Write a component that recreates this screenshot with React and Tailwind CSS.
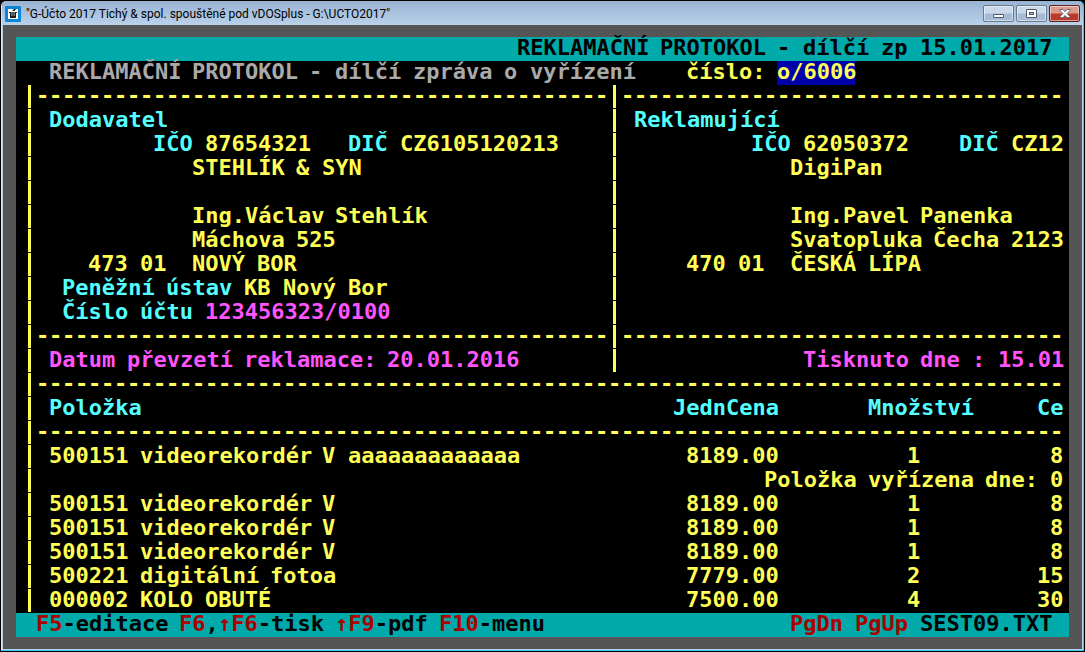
const LINE =
  "grid h-6 grid-cols-[repeat(80,minmax(0,1fr))] pl-[7px] pr-[6px] leading-[22px]";

// Screen texts sit on an 80 column character grid, `at` is the first column
const place = (at, length) => ({ gridColumn: `${at + 1} / span ${length}` });

// Words with their offsets inside the run, so each one starts on its own column
const wordsOf = (text) =>
  [...text.matchAll(/\S+/g)].map((m) => ({ offset: m.index, word: m[0] }));

function Run({ as: Tag = "span", at, text, className = "" }) {
  return (
    <Tag
      className={`row-start-1 grid grid-cols-subgrid p-0 text-left whitespace-pre ${className}`}
      style={place(at, text.length)}
    >
      {wordsOf(text).map(({ offset, word }) => (
        <span key={offset} className="row-start-1" style={place(offset, word.length)}>
          {word}
        </span>
      ))}
    </Tag>
  );
}

function Bar({ at = 0, as: Tag = "span" }) {
  return (
    <Tag className="row-start-1 flex justify-center p-0" style={place(at, 1)}>
      <span className="h-[23px] w-[3px] bg-[#ffff55]" />
    </Tag>
  );
}

function Dashes({ at, count, as: Tag = "span" }) {
  return (
    <Tag
      className="row-start-1 grid grid-cols-subgrid p-0 text-center"
      style={place(at, count)}
    >
      {Array.from({ length: count }, (_, i) => (
        <span key={i}>-</span>
      ))}
    </Tag>
  );
}

const Line = ({ children, className = "" }) => (
  <div className={`${LINE} ${className}`}>{children}</div>
);

function Split({ children }) {
  return (
    <Line>
      <Bar />
      <Bar at={45} />
      {children}
    </Line>
  );
}

const CYAN = "text-[#55ffff]";
const PINK = "text-[#ff55ff]";

const items = [
  { name: "500151 videorekordér V aaaaaaaaaaaaa", price: "8189.00", count: "1", total: "8", note: "Položka vyřízena dne: 0" },
  { name: "500151 videorekordér V", price: "8189.00", count: "1", total: "8" },
  { name: "500151 videorekordér V", price: "8189.00", count: "1", total: "8" },
  { name: "500151 videorekordér V", price: "8189.00", count: "1", total: "8" },
  { name: "500221 digitální fotoa", price: "7779.00", count: "2", total: "15" },
  { name: "000002 KOLO OBUTÉ", price: "7500.00", count: "4", total: "30" },
];

function ItemRow({ item }) {
  return (
    <>
      <tr className={LINE}>
        <Bar as="td" />
        <Run as="td" at={2} text={item.name} />
        <Run as="td" at={51} text={item.price} />
        <Run as="td" at={68} text={item.count} />
        <Run as="td" at={80 - item.total.length} text={item.total} />
      </tr>
      {item.note && (
        <tr className={LINE}>
          <Bar as="td" />
          <Run as="td" at={57} text={item.note} />
        </tr>
      )}
    </>
  );
}

function ItemTable() {
  return (
    <table className="block">
      <thead className="block">
        <tr className={`${LINE} ${CYAN}`}>
          <Bar as="td" />
          <Run as="th" at={2} text="Položka" />
          <Run as="th" at={50} text="JednCena" />
          <Run as="th" at={65} text="Množství" />
          <Run as="th" at={78} text="Ce" />
        </tr>
        <tr className={LINE}>
          <Bar as="td" />
          <Dashes as="td" at={1} count={79} />
        </tr>
      </thead>
      <tbody className="block">
        {items.map((item, i) => (
          <ItemRow key={i} item={item} />
        ))}
      </tbody>
    </table>
  );
}

function KeyHint({ at, keys, label = "" }) {
  return (
    <button
      type="button"
      className="row-start-1 self-start text-left whitespace-pre"
      style={place(at, keys.length + label.length)}
    >
      <span className="text-[#aa0000]">{keys}</span>
      {label}
    </button>
  );
}

function TitleButton({ label, className, children }) {
  return (
    <button
      type="button"
      aria-label={label}
      className={`flex h-[17px] w-[31px] items-center justify-center rounded-[2px] border shadow-[inset_0_0_0_1px_rgba(255,255,255,0.5)] ${className}`}
    >
      {children}
    </button>
  );
}

const GLASS =
  "border-[#66788f] bg-linear-to-b from-[#c9d9ea] from-45% to-[#a5bbd5] to-55%";

function TitleBar() {
  return (
    <header className="flex h-[24px] items-center bg-linear-to-b from-[#98b3d2] to-[#bad1ea] pt-px pr-[3px] pl-[3px]">
      <svg viewBox="0 0 16 16" className="h-4 w-4 shrink-0" aria-hidden="true">
        <rect width="16" height="16" rx="1" fill="#0b84d8" />
        <rect x="3" y="3" width="10" height="10" fill="#fff" />
        <path d="M4 6h2.5v4h3V6H12v1h-1v5H5V7H4zM7 5l2-2h2L9.5 5z" fill="#1c1c1c" />
        <path d="M6.5 6h3v4h-3z" fill="#555" />
      </svg>
      <h1 className="ml-[5px] grow truncate font-['Roboto',sans-serif] text-[12px] leading-4 text-black">
        "G-Účto 2017 Tichý &amp; spol. spouštěné pod vDOSplus - G:\UCTO2017"
      </h1>
      <div className="flex gap-[2px]">
        <TitleButton label="Minimalizovat" className={GLASS}>
          <svg viewBox="0 0 12 10" className="h-[10px] w-3">
            <rect x="0.5" y="5.5" width="10" height="3" rx="0.5" fill="#fff" stroke="#535666" />
          </svg>
        </TitleButton>
        <TitleButton label="Maximalizovat" className={GLASS}>
          <svg viewBox="0 0 12 10" className="h-[10px] w-3">
            <rect x="0.5" y="0.5" width="10" height="8" rx="0.5" fill="#fff" stroke="#535666" />
            <rect x="3.5" y="3.5" width="4" height="2" fill="#a5bbd5" stroke="#535666" />
          </svg>
        </TitleButton>
        <TitleButton
          label="Zavřít"
          className="border-[#5c1f22] bg-linear-to-b from-[#dc9a8c] from-45% to-[#b93a28] to-55%"
        >
          <svg viewBox="0 0 12 10" className="h-[10px] w-3">
            <path
              d="M1 0.5h3l2 2.2 2-2.2h3v1L8.2 4.5 11 7.7v1H8L6 6.5 4 8.7H1v-1l2.8-3.2L1 1.5z"
              fill="#fff"
              stroke="#535666"
              strokeWidth="0.9"
            />
          </svg>
        </TitleButton>
      </div>
    </header>
  );
}

export default function App() {
  return (
    <div className="border border-black bg-black">
      <div className="overflow-hidden rounded-t-[5px] border border-t-0 border-[#d5e6f5] border-r-[#35c8f5] border-b-[#35c8f5] bg-[#555555]">
        <TitleBar />
        <main className="border border-t-0 border-[#b9d1ea] px-[13px] py-[12px] font-['DejaVu_Sans_Mono',monospace] text-[22px] font-bold text-[#ffff55]">
          <div className="bg-black">
            <Line className="bg-[#00aaaa] text-black">
              <Run at={38} text="REKLAMAČNÍ PROTOKOL - dílčí zp 15.01.2017" />
            </Line>
            <Line>
              <Run
                at={2}
                text="REKLAMAČNÍ PROTOKOL - dílčí zpráva o vyřízení"
                className="text-[#aaaaaa]"
              />
              <Run at={51} text="číslo:" />
              <Run at={58} text="o/6006" className="bg-[#0000aa]" />
            </Line>
            <Split>
              <Dashes at={1} count={44} />
              <Dashes at={46} count={34} />
            </Split>
            <Split>
              <Run at={2} text="Dodavatel" className={CYAN} />
              <Run at={47} text="Reklamující" className={CYAN} />
            </Split>
            <Split>
              <Run at={10} text="IČO" className={CYAN} />
              <Run at={14} text="87654321" />
              <Run at={25} text="DIČ" className={CYAN} />
              <Run at={29} text="CZ6105120213" />
              <Run at={56} text="IČO" className={CYAN} />
              <Run at={60} text="62050372" />
              <Run at={72} text="DIČ" className={CYAN} />
              <Run at={76} text="CZ12" />
            </Split>
            <Split>
              <Run at={13} text="STEHLÍK & SYN" />
              <Run at={59} text="DigiPan" />
            </Split>
            <Split />
            <Split>
              <Run at={13} text="Ing.Václav Stehlík" />
              <Run at={59} text="Ing.Pavel Panenka" />
            </Split>
            <Split>
              <Run at={13} text="Máchova 525" />
              <Run at={59} text="Svatopluka Čecha 2123" />
            </Split>
            <Split>
              <Run at={5} text="473 01" />
              <Run at={13} text="NOVÝ BOR" />
              <Run at={51} text="470 01" />
              <Run at={59} text="ČESKÁ LÍPA" />
            </Split>
            <Split>
              <Run at={3} text="Peněžní ústav" className={CYAN} />
              <Run at={17} text="KB Nový Bor" />
            </Split>
            <Split>
              <Run at={3} text="Číslo účtu" className={CYAN} />
              <Run at={14} text="123456323/0100" className={PINK} />
            </Split>
            <Split>
              <Dashes at={1} count={44} />
              <Dashes at={46} count={34} />
            </Split>
            <Split>
              <Run at={2} text="Datum převzetí reklamace: 20.01.2016" className={PINK} />
              <Run at={60} text="Tisknuto dne : 15.01" className={PINK} />
            </Split>
            <Line>
              <Bar />
              <Dashes at={1} count={79} />
            </Line>
            <ItemTable />
            <Line className="bg-[#00aaaa] text-black">
              <KeyHint at={1} keys="F5" label="-editace" />
              <KeyHint at={12} keys="F6" label="," />
              <KeyHint at={15} keys="↑F6" label="-tisk" />
              <KeyHint at={24} keys="↑F9" label="-pdf" />
              <KeyHint at={32} keys="F10" label="-menu" />
              <KeyHint at={59} keys="PgDn" />
              <KeyHint at={64} keys="PgUp" />
              <Run at={69} text="SEST09.TXT" />
            </Line>
          </div>
        </main>
      </div>
    </div>
  );
}
